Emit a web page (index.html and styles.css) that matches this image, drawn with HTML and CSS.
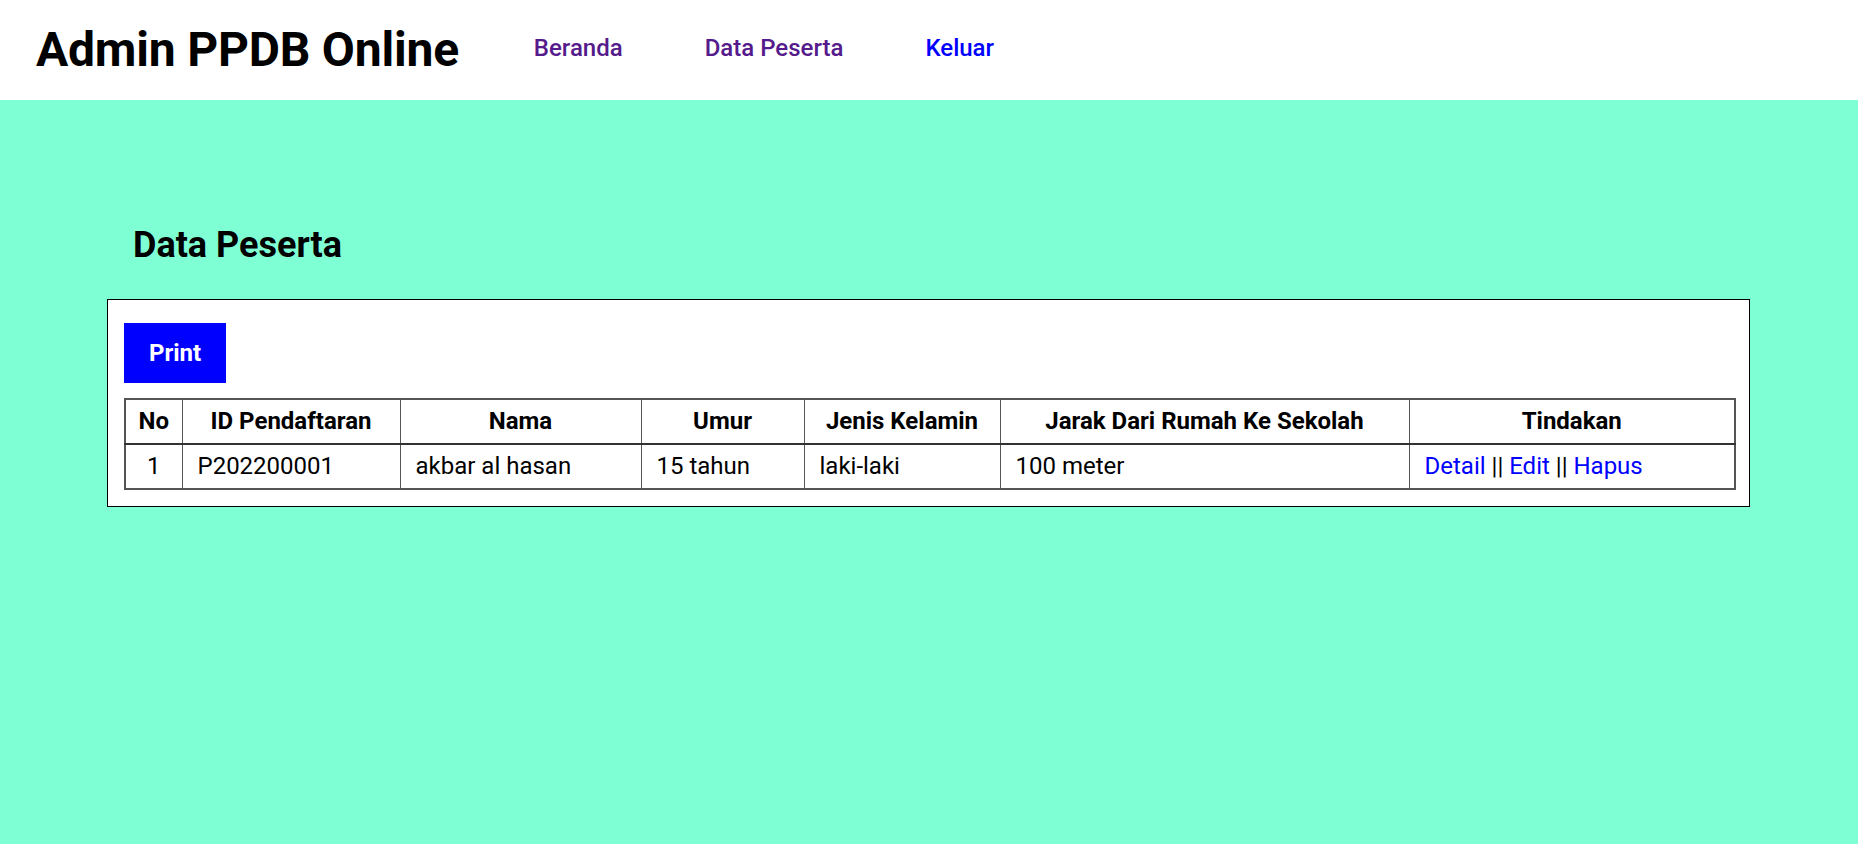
FILE: index.html
```html
<!DOCTYPE html>
<html lang="id">
<head>
<meta charset="utf-8">
<title>Admin PPDB Online</title>
<link rel="stylesheet" href="styles.css">
</head>
<body>
<header class="topbar">
  <h1 class="brand">Admin PPDB Online</h1>
  <nav class="nav">
    <a class="nav-link visited" href="#">Beranda</a>
    <a class="nav-link visited" href="#">Data Peserta</a>
    <a class="nav-link" href="#">Keluar</a>
  </nav>
</header>
<main class="main">
  <h2 class="page-title">Data Peserta</h2>
  <section class="card">
    <button class="btn-print" type="button">Print</button>
    <table class="data-table">
      <colgroup>
        <col class="c-no"><col class="c-id"><col class="c-nama"><col class="c-umur"><col class="c-jk"><col class="c-jarak"><col class="c-aksi">
      </colgroup>
      <thead>
        <tr>
          <th>No</th>
          <th>ID Pendaftaran</th>
          <th>Nama</th>
          <th>Umur</th>
          <th>Jenis Kelamin</th>
          <th>Jarak Dari Rumah Ke Sekolah</th>
          <th>Tindakan</th>
        </tr>
      </thead>
      <tbody>
        <tr>
          <td class="center">1</td>
          <td>P202200001</td>
          <td>akbar al hasan</td>
          <td>15 tahun</td>
          <td>laki-laki</td>
          <td>100 meter</td>
          <td><a class="act" href="#">Detail</a> || <a class="act" href="#">Edit</a> || <a class="act" href="#">Hapus</a></td>
        </tr>
      </tbody>
    </table>
  </section>
</main>
</body>
</html>
```
FILE: styles.css
```css
html, body {
  margin: 0;
  padding: 0;
}
body {
  font-family: Roboto, "Liberation Sans", sans-serif;
  font-size: 24px;
  color: #000;
  background: #7fffd4;
}
.topbar {
  background: #fff;
  height: 100px;
  display: flex;
  align-items: center;
  padding-left: 36px;
}
.brand {
  margin: 0;
  font-size: 48px;
  font-weight: 700;
  line-height: 56px;
  letter-spacing: -0.2px;
}
.nav {
  display: flex;
  gap: 82px;
  margin-left: 75px;
  padding-bottom: 4px;
}
.nav-link {
  font-size: 24px;
  font-weight: 500;
  color: #0000ff;
  text-decoration: none;
}
.nav-link.visited {
  color: #551a8b;
}
.main {
  padding: 116px 108px 0 107px;
  min-height: 744px;
  box-sizing: border-box;
}
.page-title {
  margin: 0 0 25px 26px;
  font-size: 36px;
  font-weight: 700;
  line-height: 58px;
}
.card {
  background: #fff;
  border: 1px solid #000;
  padding: 23px 16px 16px 16px;
}
.btn-print {
  display: block;
  background: #0000ff;
  color: #fff;
  border: none;
  font-family: inherit;
  font-size: 24px;
  font-weight: 700;
  padding: 0 25px;
  height: 60px;
  margin-bottom: 15px;
}
.data-table {
  width: 100%;
  table-layout: fixed;
  border-collapse: collapse;
  border: 2px solid #555;
}
.c-no { width: 57px; }
.c-id { width: 218px; }
.c-nama { width: 241px; }
.c-umur { width: 163px; }
.c-jk { width: 196px; }
.c-jarak { width: 409px; }
.c-aksi { width: 326px; }
.data-table th,
.data-table td {
  border: 1px solid #555;
  padding: 7px 15px 8px;
  line-height: 28px;
  white-space: nowrap;
}
.data-table th {
  font-weight: 700;
  text-align: center;
  padding-left: 4px;
  padding-right: 4px;
}
.data-table thead tr {
  border-bottom: 2px solid #333;
}
.data-table td {
  text-align: left;
}
.data-table td.center {
  text-align: center;
}
.act {
  color: #0000ff;
  text-decoration: none;
}
```
